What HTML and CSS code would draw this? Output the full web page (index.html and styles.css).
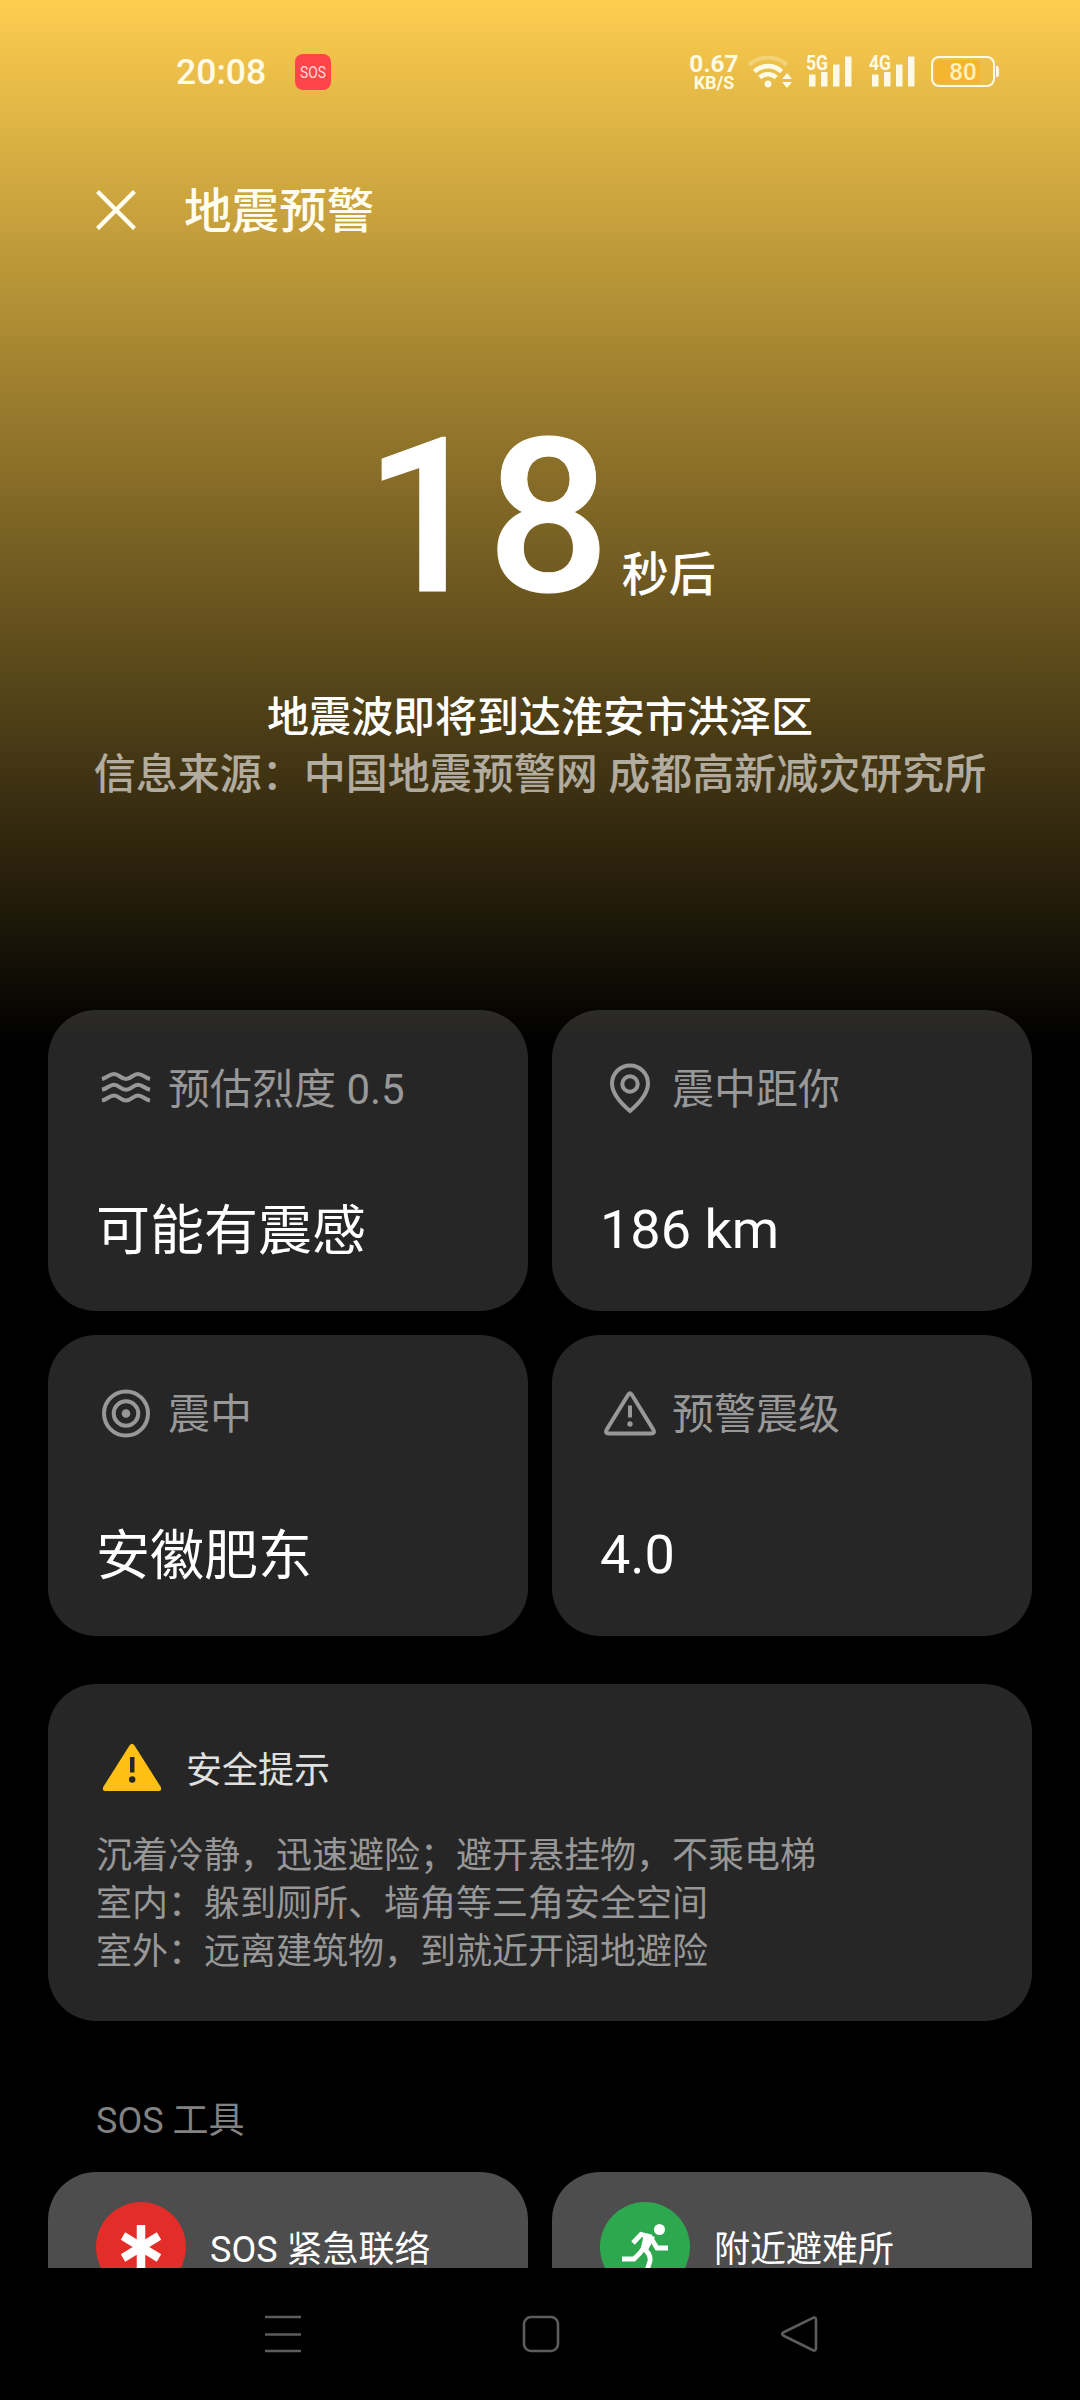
FILE: index.html
```html
<!DOCTYPE html>
<html lang="zh-CN">
<head>
<meta charset="utf-8">
<title>地震预警</title>
<link rel="stylesheet" href="styles.css">
</head>
<body>
<main class="screen">
  <header class="status-bar">
    <span class="clock">20:08</span>
    <span class="sos-badge"><svg width="36" height="36" viewBox="0 0 36 36"><text x="5" y="24" font-size="17" textLength="26" lengthAdjust="spacingAndGlyphs">SOS</text></svg></span>
    <div class="net-speed"><span class="rate">0.67</span><span class="unit">KB/S</span></div>
    <svg class="wifi" width="50" height="40" viewBox="0 0 50 40">
      <g fill="none" stroke="currentColor">
        <path d="M4 13A28 28 0 0 1 42 13" stroke-width="4" opacity=".3"/>
        <path d="M9.400 19.500A20 20 0 0 1 36.600 19.500" stroke-width="4.600"/>
        <path d="M14.800 25.500A12 12 0 0 1 31.200 25.500" stroke-width="4.600"/>
      </g>
      <circle cx="23" cy="32" r="3.400" fill="currentColor"/>
      <path d="M42 21L47 27H37ZM42 36L47 30H37Z" fill="currentColor"/>
    </svg>
    <svg class="signal" width="48" height="36" viewBox="0 0 48 36">
      <text x="0" y="16" textLength="22" lengthAdjust="spacingAndGlyphs">5G</text>
      <path d="M3 20.500h6.500v12h-6.500zM15 18h6.500V32.500h-6.500zM27 10.500h6.500v22h-6.500zM39 2.500h6.500v30h-6.500z"/>
    </svg>
    <svg class="signal" width="48" height="36" viewBox="0 0 48 36">
      <text x="0" y="16" textLength="22" lengthAdjust="spacingAndGlyphs">4G</text>
      <path d="M3 20.500h6.500v12h-6.500zM15 18h6.500V32.500h-6.500zM27 10.500h6.500v22h-6.500zM39 2.500h6.500v30h-6.500z"/>
    </svg>
    <div class="battery"><span class="battery-level">80</span></div>
  </header>

  <div class="title-bar">
    <svg width="40" height="40" viewBox="0 0 40 40"><path d="M1.500 1.500L38.500 38.500M38.500 1.500L1.500 38.500" stroke="currentColor" stroke-width="4.400"/></svg>
    <h1>地震预警</h1>
  </div>

  <section class="countdown">
    <div class="timer"><span class="seconds">18</span><span class="suffix">秒后</span></div>
    <p class="arrival">地震波即将到达淮安市洪泽区</p>
    <p class="source">信息来源：中国地震预警网 成都高新减灾研究所</p>
  </section>

  <section class="stats">
    <article class="card">
      <div class="label">
        <svg width="60" height="60" viewBox="0 0 60 60"><path d="M6 20C12 18.500 13 15 18 15S25 20 30 20 37 15 42 15 48 18.500 54 20M6 30.800C12 29.300 13 25.800 18 25.800S25 30.800 30 30.800 37 25.800 42 25.800 48 29.300 54 30.800M6 41.600C12 40.100 13 36.600 18 36.600S25 41.600 30 41.600 37 36.600 42 36.600 48 40.100 54 41.600"/></svg>
        <span>预估烈度 0.5</span>
      </div>
      <div class="value hanzi">可能有震感</div>
    </article>
    <article class="card">
      <div class="label">
        <svg width="60" height="60" viewBox="0 0 60 60"><path d="M30 52C20 43.500 12 34.500 12 24.500A18 18 0 0 1 48 24.500C48 34.500 40 43.500 30 52Z"/><circle cx="30" cy="25" r="7.700"/></svg>
        <span>震中距你</span>
      </div>
      <div class="value">186 km</div>
    </article>
    <article class="card">
      <div class="label">
        <svg width="60" height="60" viewBox="0 0 60 60"><circle cx="30" cy="29.500" r="22"/><circle cx="30" cy="29.500" r="12.300"/><circle class="solid" cx="30" cy="29.500" r="4.300"/></svg>
        <span>震中</span>
      </div>
      <div class="value hanzi">安徽肥东</div>
    </article>
    <article class="card">
      <div class="label">
        <svg width="60" height="60" viewBox="0 0 60 60"><path d="M28.300 10.500Q30 8 31.700 10.500L53.500 46Q55 49.500 51.500 49.500H8.500Q5 49.500 6.500 46Z"/><path d="M30 21.500V33.500"/><circle class="solid" cx="30" cy="40" r="2.700"/></svg>
        <span>预警震级</span>
      </div>
      <div class="value">4.0</div>
    </article>
  </section>

  <section class="card tips">
    <div class="tips-head">
      <svg width="60" height="60" viewBox="0 0 60 60"><path d="M27.500 8.500Q30 5 32.500 8.500L58.800 50Q60 54 57 54H3Q0 54 1.200 50Z" fill="#ffc013"/><path d="M28 20h4.500v15.500H28z" fill="#262626"/><circle cx="30.200" cy="42.500" r="3.200" fill="#262626"/></svg>
      <h2>安全提示</h2>
    </div>
    <p>沉着冷静，迅速避险；避开悬挂物，不乘电梯<br>室内：躲到厕所、墙角等三角安全空间<br>室外：远离建筑物，到就近开阔地避险</p>
  </section>

  <section class="tools">
    <h3>SOS 工具</h3>
    <div class="tool-list">
      <div class="tool">
        <svg width="90" height="90" viewBox="0 0 90 90"><circle cx="45" cy="45" r="45" fill="#e32d28"/><path d="M45 23V67M27 34L63 56M63 34L27 56" stroke="#fff" stroke-width="8.500"/></svg>
        <span>SOS 紧急联络</span>
      </div>
      <div class="tool">
        <svg width="90" height="90" viewBox="0 0 90 90"><circle cx="45" cy="45" r="45" fill="#2ea84f"/><circle cx="59.500" cy="27.500" r="5.500" fill="#fff"/><path d="M33 41L41 32.500L50 34.500L57 46H68" fill="none" stroke="#fff" stroke-width="4.800"/><path d="M51 35L40 51L34 57H22" fill="none" stroke="#fff" stroke-width="4.800"/><path d="M44 31.500L55 35L48 48L40 50Z" fill="#fff"/><path d="M44 47Q51 52 50 59L46 72" fill="none" stroke="#fff" stroke-width="4.800"/></svg>
        <span>附近避难所</span>
      </div>
    </div>
  </section>

  <nav class="nav-bar">
    <svg width="38" height="38" viewBox="0 0 38 38"><path d="M1 2H37M1 19.500H37M1 36H37"/></svg>
    <svg width="38" height="38" viewBox="0 0 38 38"><rect x="2" y="2" width="34" height="34" rx="7"/></svg>
    <svg width="38" height="38" viewBox="0 0 38 38"><path d="M33 2.800L3.200 17.500Q1 19 3.200 20.500L33 35.200Q36 36.500 36 33V5Q36 1.500 33 2.800Z"/></svg>
  </nav>
</main>
</body>
</html>
```

FILE: styles.css
```css
* { box-sizing: border-box; }

body {
  margin: 0;
  background: #000;
  color: #fff;
  font-family: Roboto, "Noto Sans CJK SC", sans-serif;
}

h1, h2, h3, p { margin: 0; font-weight: 400; }
svg { display: block; flex: none; }

.screen {
  display: flex;
  flex-direction: column;
  width: 1080px;
  height: 2400px;
  overflow: hidden;
  background: linear-gradient(#fdcd4f 0, #9a7c2d 400px, #000 1042px);
}

/* Status bar */
.status-bar {
  display: flex;
  align-items: center;
  flex: none;
  height: 143px;
  padding: 0 82px 0 176px;
  color: #fffae4;
}
.clock {
  width: 119px;
  font-size: 35.6px;
  font-weight: 500;
  line-height: 40px;
}
.sos-badge {
  width: 36px;
  height: 36px;
  border-radius: 8px;
  background: #ff4549;
}
.sos-badge text { fill: #ffdcdc; }
.net-speed {
  display: flex;
  flex-direction: column;
  align-items: center;
  width: 50px;
  margin-left: auto;
  font-weight: 700;
}
.rate { font-size: 24.5px; line-height: 21px; }
.unit { font-size: 18px; line-height: 17px; }
.wifi { margin: 0 11px 0 6px; }
.signal { margin-right: 15px; fill: currentColor; }
.signal text { font-size: 21px; font-weight: 700; }
.battery {
  position: relative;
  width: 64px;
  height: 31px;
  margin: 0 3px 0 -1px;
  padding: 2px;
  border: 2px solid currentColor;
  border-radius: 8px;
}
.battery::after {
  content: "";
  position: absolute;
  right: -6px;
  top: 8px;
  width: 3px;
  height: 11px;
  border-radius: 0 2px 2px 0;
  background: currentColor;
}
.battery-level {
  display: block;
  width: 100%;
  height: 100%;
  border-radius: 4px;
  background: linear-gradient(90deg, #f3b62e 80%, transparent 80%);
  color: #fff0bf;
  font-size: 24px;
  font-weight: 500;
  line-height: 24px;
  text-align: center;
}

/* Title */
.title-bar {
  display: flex;
  align-items: center;
  flex: none;
  gap: 48px;
  height: 133px;
  padding-left: 96px;
  color: #fffdf0;
}
.title-bar h1 {
  padding-top: 4px;
  font-size: 47.6px;
  font-weight: 500;
  line-height: 60px;
}

/* Countdown */
.countdown {
  flex: none;
  height: 734px;
  padding-top: 122px;
  text-align: center;
}
.timer {
  display: flex;
  justify-content: center;
  align-items: baseline;
  gap: 12px;
  height: 291px;
  line-height: 240px;
}
.seconds {
  font-size: 216px;
  font-weight: 500;
  -webkit-text-stroke: 1px currentColor;
}
.suffix { font-size: 47px; font-weight: 500; }
.arrival, .source { font-size: 42px; font-weight: 500; line-height: 57px; }
.source { color: rgba(255, 255, 255, .6); }

/* Information cards */
.card {
  padding: 48px;
  border-radius: 48px;
  background: rgba(255, 255, 255, .15);
}
.stats {
  display: grid;
  grid-template-columns: 480px 480px;
  grid-auto-rows: 301px;
  gap: 24px;
  flex: none;
  padding: 0 48px;
}
.label {
  display: flex;
  gap: 12px;
  height: 60px;
  margin-top: 1px;
  color: #989898;
  font-size: 42px;
  line-height: 61px;
}
.label svg { fill: none; stroke: currentColor; stroke-width: 4; }
.label .solid { fill: currentColor; stroke: none; }
.value { margin-top: 75px; font-size: 54px; line-height: 72px; }
.value.hanzi { margin-top: 77px; }

.tips {
  flex: none;
  height: 337px;
  margin: 48px 48px 0;
}
.tips-head {
  display: flex;
  align-items: center;
  gap: 24px;
  height: 60px;
  margin: 5px 0 0 6px;
}
.tips-head h2 { color: #e0e0e0; font-size: 36px; }
.tips p { margin-top: 35px; color: #979797; font-size: 36px; line-height: 48px; }

/* SOS tools */
.tools {
  display: flex;
  flex-direction: column;
  flex: none;
  height: 247px;
  padding: 76px 48px 0;
  overflow: hidden;
}
.tools h3 {
  flex: none;
  height: 75px;
  padding-left: 48px;
  color: #828282;
  font-size: 36px;
  line-height: 48px;
}
.tool-list {
  display: grid;
  grid-template-columns: 480px 480px;
  gap: 24px;
  flex: none;
}
.tool {
  display: flex;
  align-items: center;
  gap: 24px;
  height: 150px;
  padding: 0 48px;
  border-radius: 48px;
  background: #4d4d4d;
  font-size: 36px;
  line-height: 48px;
}
.tool span { padding-top: 5px; }

/* Navigation bar */
.nav-bar {
  display: flex;
  justify-content: space-between;
  align-items: center;
  flex: none;
  height: 132px;
  padding: 0 262px 0 264px;
  background: #000;
}
.nav-bar svg { fill: none; stroke: #5c5c5c; stroke-width: 2.600; }
```
